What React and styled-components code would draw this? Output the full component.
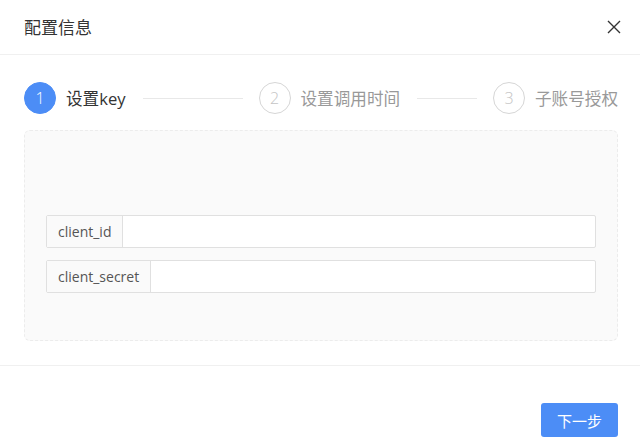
import React from "react";
import styled, { createGlobalStyle } from "styled-components";

const Global = createGlobalStyle`
  html, body { margin: 0; padding: 0; background: #fff; }
  body { font-family: "Open Sans", "Noto Sans CJK SC", sans-serif; color: #333; }
  * { box-sizing: border-box; }
`;

const Dialog = styled.div`
  width: 640px;
  height: 445px;
  background: #fff;
  display: flex;
  flex-direction: column;
`;

const Header = styled.div`
  height: 55px;
  padding: 0 18px 1px 24px;
  display: flex;
  align-items: center;
  justify-content: space-between;
  border-bottom: 1px solid #f0f0f0;
`;

const Title = styled.div`
  font-size: 17px;
  color: #333;
  font-family: "Noto Sans CJK SC", sans-serif;
`;

const Close = styled.button`
  border: none;
  background: none;
  padding: 0;
  width: 16px;
  height: 16px;
  display: flex;
  align-items: center;
  justify-content: center;
  cursor: pointer;
`;

const Body = styled.div`
  padding: 27px 22px 0 24px;
`;

const Steps = styled.div`
  display: flex;
  align-items: center;
`;

const Step = styled.div`
  display: flex;
  align-items: center;
  flex: ${(p) => (p.$last ? "none" : "1 1 0")};
`;

const Circle = styled.div`
  width: 32px;
  height: 32px;
  border-radius: 50%;
  flex: none;
  display: flex;
  align-items: center;
  justify-content: center;
  font-size: 16px;
  font-weight: 300;
  background: ${(p) => (p.$active ? "#4c8df6" : "#fff")};
  border: 1px solid ${(p) => (p.$active ? "#4c8df6" : "#d6d6d6")};
  color: ${(p) => (p.$active ? "#fff" : "#c4c4c4")};
`;

const StepLabel = styled.div`
  margin-left: 10px;
  font-size: 16.6px;
  white-space: nowrap;
  font-family: "Open Sans", "Noto Sans CJK SC", sans-serif;
  color: ${(p) => (p.$active ? "#333" : "#999")};
`;

const Tail = styled.div`
  flex: 1;
  height: 1px;
  margin: 0 16px 0 17px;
  background: #e8e8e8;
`;

const Panel = styled.div`
  margin-top: 16px;
  height: 211px;
  background: #fafafa;
  border: 1px dashed #ececec;
  border-radius: 6px;
  padding: 84px 21px 0 21px;
  display: flex;
  flex-direction: column;
  gap: 12px;
`;

const Field = styled.div`
  display: flex;
  height: 33px;
  border: 1px solid #e0e0e0;
  border-radius: 2px;
  background: #fff;
`;

const Addon = styled.div`
  padding: 0 11px;
  display: flex;
  align-items: center;
  background: #fafafa;
  border-right: 1px solid #e0e0e0;
  font-size: 14px;
  color: #555;
`;

const Input = styled.input`
  flex: 1;
  border: none;
  outline: none;
  background: transparent;
  padding: 0 10px;
  font-size: 14px;
`;

const Footer = styled.div`
  margin-top: 24px;
  border-top: 1px solid #f0f0f0;
  padding: 37px 22px 0 0;
  display: flex;
  justify-content: flex-end;
`;

const Primary = styled.button`
  width: 77px;
  height: 34px;
  border: none;
  border-radius: 3px;
  background: #4c8df6;
  color: #fff;
  font-size: 15px;
  font-family: "Noto Sans CJK SC", sans-serif;
  cursor: pointer;
`;

const steps = ["设置key", "设置调用时间", "子账号授权"];

export default function App() {
  return (
    <Dialog>
      <Global />
      <Header>
        <Title>配置信息</Title>
        <Close aria-label="close">
          <svg width="14" height="14" viewBox="0 0 14 14">
            <path d="M1 1L13 13M13 1L1 13" stroke="#333" strokeWidth="1.4" />
          </svg>
        </Close>
      </Header>
      <Body>
        <Steps>
          {steps.map((s, i) => {
            const last = i === steps.length - 1;
            return (
              <Step key={s} $last={last}>
                <Circle $active={i === 0}>{i + 1}</Circle>
                <StepLabel $active={i === 0}>{s}</StepLabel>
                {!last && <Tail />}
              </Step>
            );
          })}
        </Steps>
        <Panel>
          <Field>
            <Addon>client_id</Addon>
            <Input />
          </Field>
          <Field>
            <Addon>client_secret</Addon>
            <Input />
          </Field>
        </Panel>
      </Body>
      <Footer>
        <Primary>下一步</Primary>
      </Footer>
    </Dialog>
  );
}
